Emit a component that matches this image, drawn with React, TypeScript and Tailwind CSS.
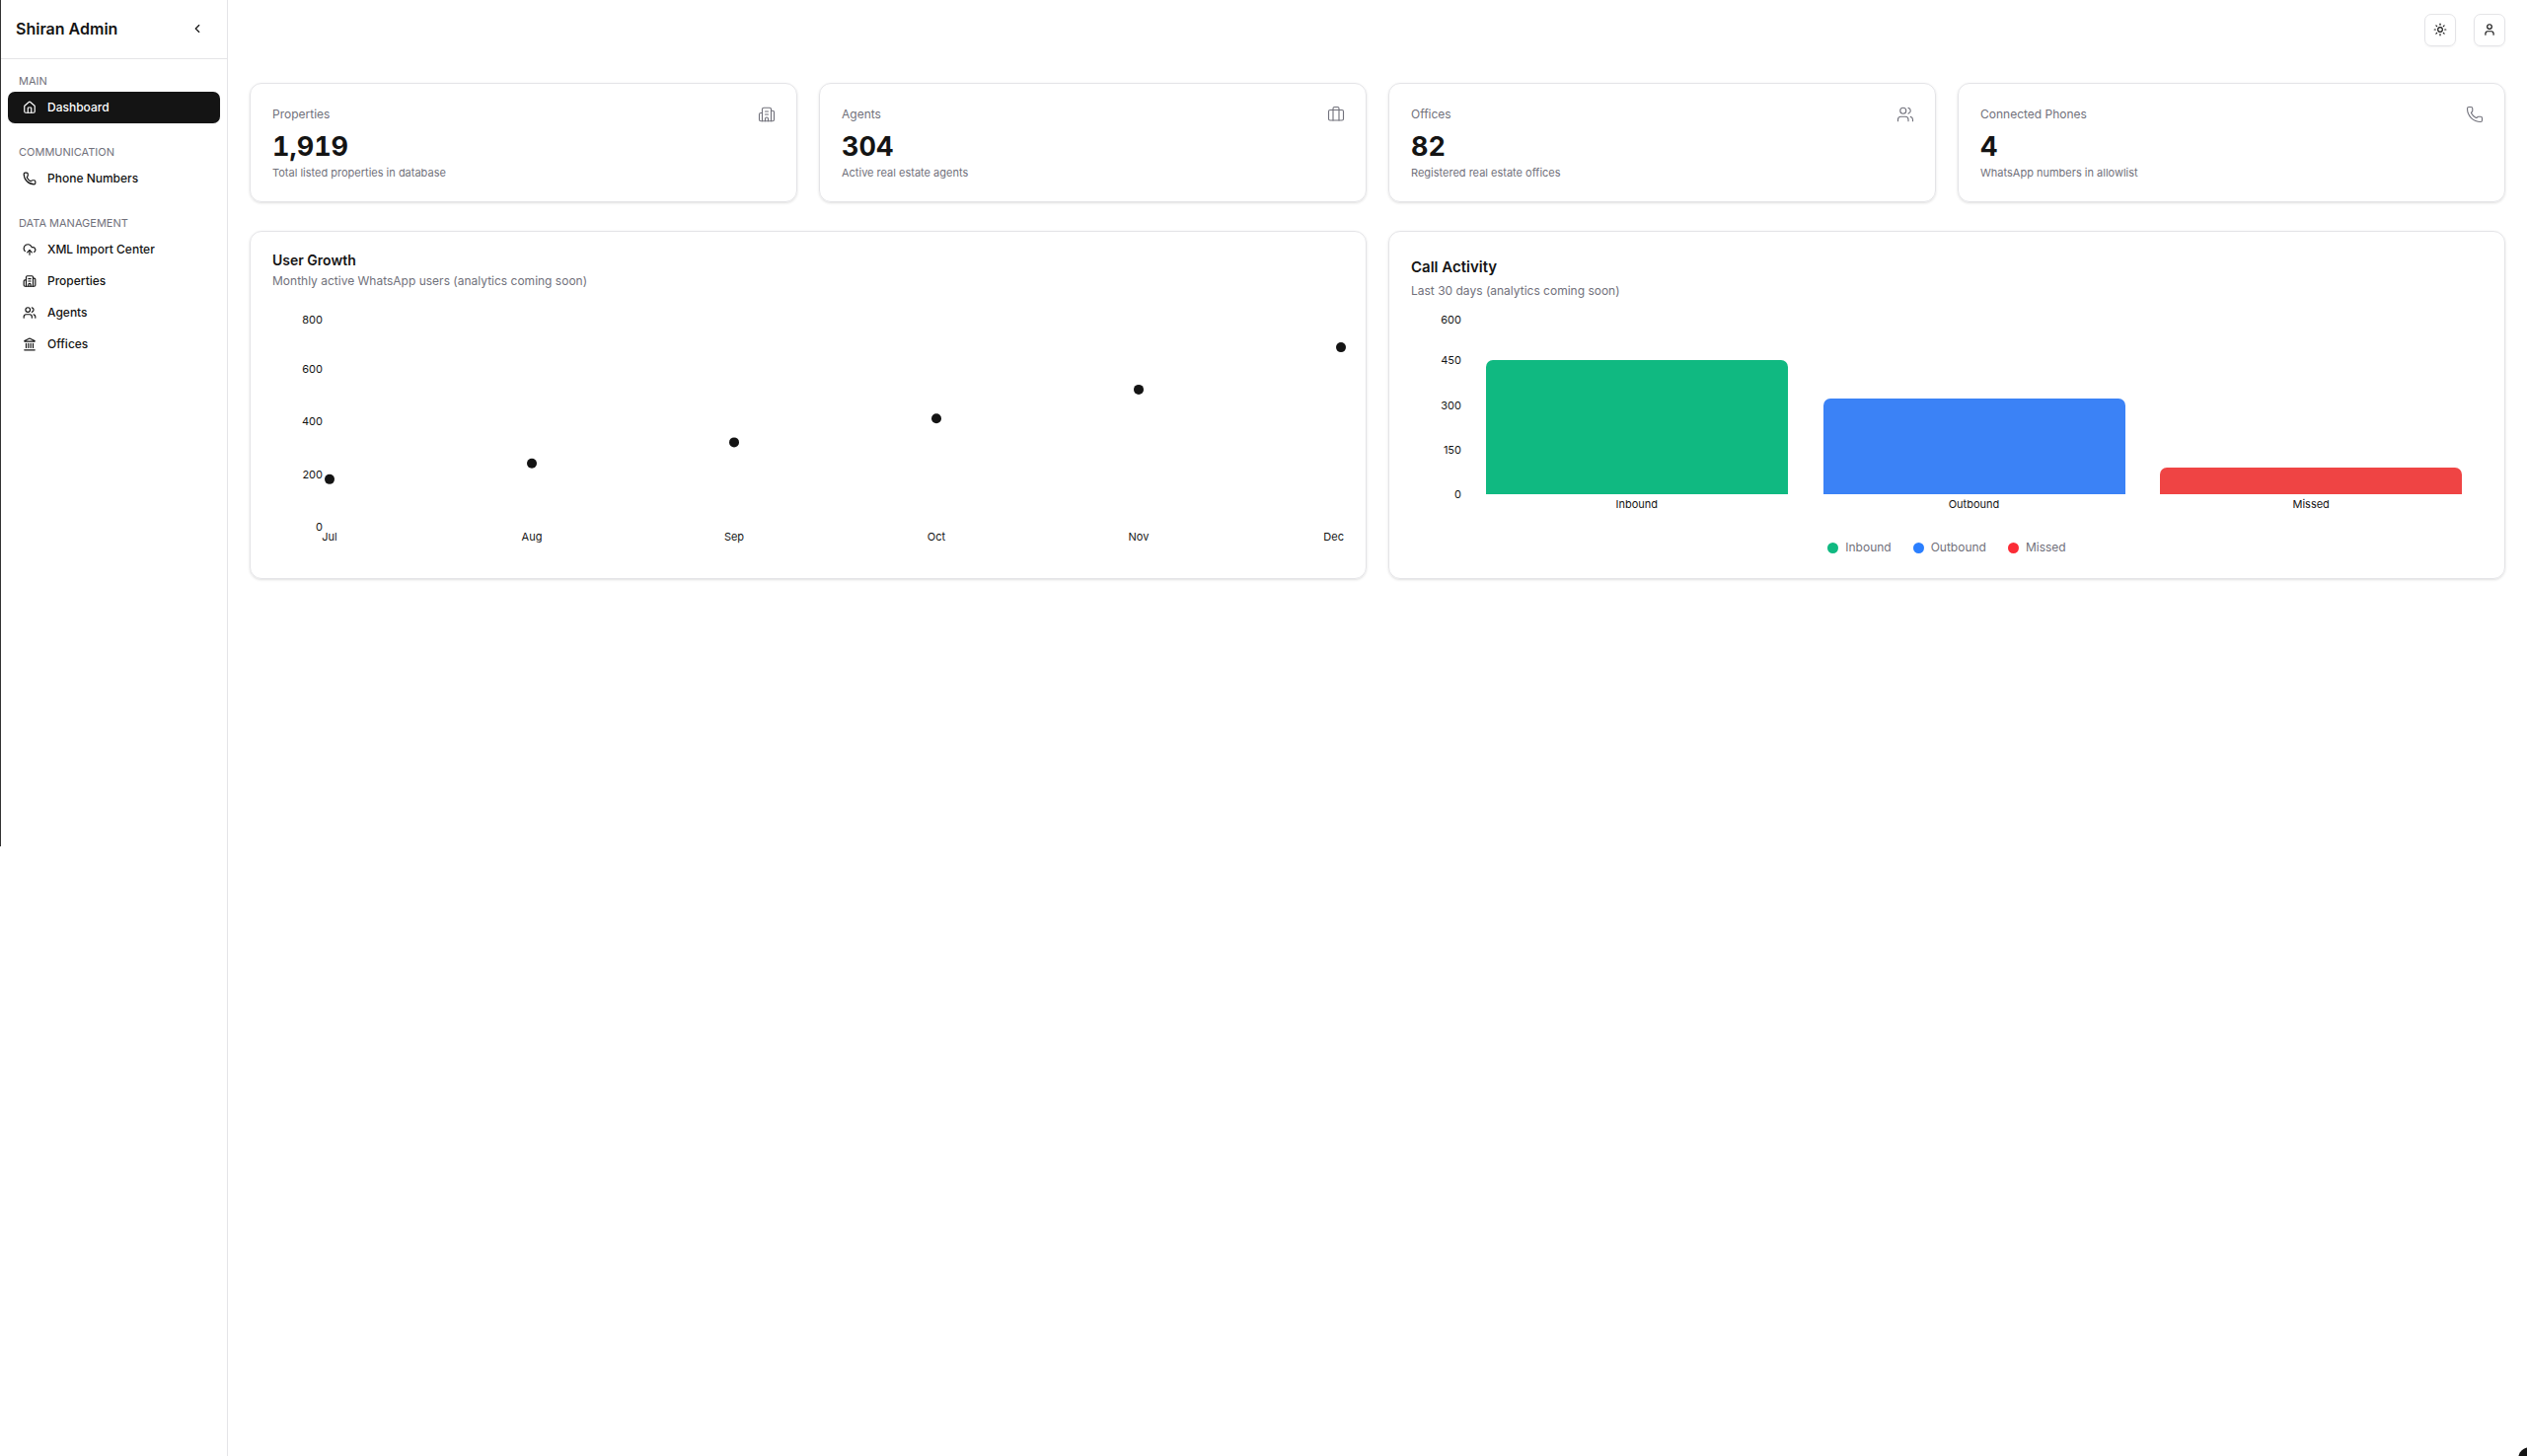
import { useLayoutEffect, useRef, useState } from "react";
import type { ReactNode } from "react";
import {
  Briefcase,
  Building2,
  ChevronLeft,
  CloudUpload,
  House,
  Landmark,
  Phone,
  Sun,
  User,
  Users,
} from "lucide-react";
import type { LucideIcon } from "lucide-react";

type NavItem = { label: string; icon: LucideIcon; active?: boolean };

const navGroups: { title: string; items: NavItem[] }[] = [
  { title: "MAIN", items: [{ label: "Dashboard", icon: House, active: true }] },
  { title: "COMMUNICATION", items: [{ label: "Phone Numbers", icon: Phone }] },
  {
    title: "DATA MANAGEMENT",
    items: [
      { label: "XML Import Center", icon: CloudUpload },
      { label: "Properties", icon: Building2 },
      { label: "Agents", icon: Users },
      { label: "Offices", icon: Landmark },
    ],
  },
];

const stats: { label: string; value: string; note: string; icon: LucideIcon }[] = [
  { label: "Properties", value: "1,919", note: "Total listed properties in database", icon: Building2 },
  { label: "Agents", value: "304", note: "Active real estate agents", icon: Briefcase },
  { label: "Offices", value: "82", note: "Registered real estate offices", icon: Users },
  { label: "Connected Phones", value: "4", note: "WhatsApp numbers in allowlist", icon: Phone },
];

const growth = [
  { month: "Jul", users: 180 },
  { month: "Aug", users: 240 },
  { month: "Sep", users: 320 },
  { month: "Oct", users: 410 },
  { month: "Nov", users: 520 },
  { month: "Dec", users: 680 },
];

const calls = [
  { kind: "Inbound", count: 450, fill: "#10b981", dot: "bg-[#10b981]" },
  { kind: "Outbound", count: 320, fill: "#3b82f6", dot: "bg-[#2b7fff]" },
  { kind: "Missed", count: 90, fill: "#ef4444", dot: "bg-[#fb2c36]" },
];

const AXIS_WIDTH = 58;
const MARGIN_RIGHT = 3;
const MARGIN_TOP = 8;
const AXIS_HEIGHT = 30;

function Chart({ height, label, children }: { height: number; label: string; children: (width: number) => ReactNode }) {
  const ref = useRef<HTMLDivElement>(null);
  const [width, setWidth] = useState(0);

  useLayoutEffect(() => {
    const node = ref.current;
    if (!node) return;
    setWidth(node.clientWidth);
    const observer = new ResizeObserver(() => setWidth(node.clientWidth));
    observer.observe(node);
    return () => observer.disconnect();
  }, []);

  return (
    <div ref={ref} className="min-w-0">
      <svg role="img" aria-label={label} className="block w-full overflow-visible fill-[#141414] text-[11px]" height={height}>
        {width > 0 && children(width)}
      </svg>
    </div>
  );
}

function YTicks({ values, height }: { values: number[]; height: number }) {
  const bottom = height - AXIS_HEIGHT;
  const max = Math.max(...values);
  return (
    <>
      {values.map((v) => {
        const y = bottom - (v / max) * (bottom - MARGIN_TOP);
        return (
          <text key={v} x={AXIS_WIDTH - 7} y={Math.max(y, 12) + 4} textAnchor="end">
            {v}
          </text>
        );
      })}
    </>
  );
}

function GrowthChart() {
  const height = 252;
  const bottom = height - AXIS_HEIGHT;
  return (
    <Chart height={height} label="Monthly active users, July to December">
      {(width) => {
        const step = (width - AXIS_WIDTH - MARGIN_RIGHT) / (growth.length - 1);
        return (
          <>
            <YTicks values={[0, 200, 400, 600, 800]} height={height} />
            {growth.map((p, i) => {
              const x = AXIS_WIDTH + i * step;
              const last = i === growth.length - 1;
              return (
                <g key={p.month}>
                  <circle cx={x} cy={bottom - (p.users / 800) * (bottom - MARGIN_TOP)} r={5} />
                  <text x={last ? width : x} y={bottom + 14} textAnchor={last ? "end" : "middle"}>
                    {p.month}
                  </text>
                </g>
              );
            })}
          </>
        );
      }}
    </Chart>
  );
}

function CallChart() {
  const height = 219;
  const bottom = height - AXIS_HEIGHT;
  return (
    <Chart height={height} label="Calls by type over the last 30 days">
      {(width) => {
        const band = (width - AXIS_WIDTH - MARGIN_RIGHT) / calls.length;
        const barWidth = Math.round(band - 36);
        return (
          <>
            <YTicks values={[0, 150, 300, 450, 600]} height={height} />
            {calls.map((c, i) => {
              const center = AXIS_WIDTH + band * (i + 0.5);
              const x = Math.round(center - barWidth / 2);
              const top = Math.round(bottom - (c.count / 600) * (bottom - MARGIN_TOP));
              return (
                <g key={c.kind}>
                  <path
                    fill={c.fill}
                    d={`M${x} ${bottom}V${top + 7}a7 7 0 0 1 7 -7h${barWidth - 14}a7 7 0 0 1 7 7V${bottom}Z`}
                  />
                  <text x={center} y={bottom + 14} textAnchor="middle">
                    {c.kind}
                  </text>
                </g>
              );
            })}
          </>
        );
      }}
    </Chart>
  );
}

function Sidebar() {
  return (
    <aside className="w-[231px] shrink-0 border-r border-[#e4e4e7]">
      <div className="flex h-[60px] items-center justify-between border-b border-[#e4e4e7] pr-[18px] pb-0.5 pl-4">
        <span className="text-base font-semibold">Shiran Admin</span>
        <button type="button" aria-label="Collapse sidebar" className="flex size-6 items-center justify-center">
          <ChevronLeft size={14} />
        </button>
      </div>
      <nav className="flex flex-col gap-[18px] pt-[11px] pr-[7px] pl-2">
        {navGroups.map((group) => (
          <section key={group.title}>
            <h2 className="px-[11px] text-[11px] leading-[22px] font-normal text-[#71717b]">{group.title}</h2>
            <ul>
              {group.items.map(({ label, icon: Icon, active }) => (
                <li key={label}>
                  <a
                    href="#"
                    aria-current={active ? "page" : undefined}
                    className={
                      active
                        ? "flex h-8 items-center gap-[11px] rounded-[7px] bg-[#141414] px-[15px] text-xs font-medium text-white shadow-xs"
                        : "flex h-8 items-center gap-[11px] rounded-[7px] px-[15px] text-xs font-medium"
                    }
                  >
                    <Icon size={14} />
                    {label}
                  </a>
                </li>
              ))}
            </ul>
          </section>
        ))}
      </nav>
    </aside>
  );
}

function IconButton({ label, icon: Icon }: { label: string; icon: LucideIcon }) {
  return (
    <button
      type="button"
      aria-label={label}
      className="flex h-[33px] w-8 items-center justify-center rounded-[7px] border border-[#e4e4e7] shadow-xs"
    >
      <Icon size={14} />
    </button>
  );
}

export default function App() {
  return (
    <div className="relative flex min-h-screen bg-white font-['Inter',sans-serif] text-[#141414]">
      <div className="absolute top-0 left-0 h-[858px] w-px bg-[#333333]" />
      <Sidebar />
      <div className="min-w-0 flex-1">
        <header className="flex h-[60px] items-center justify-end gap-[18px] px-[22px]">
          <IconButton label="Toggle theme" icon={Sun} />
          <IconButton label="Account" icon={User} />
        </header>
        <main className="flex flex-col gap-[29px] px-[22px] pt-6">
          <div className="grid grid-cols-4 gap-[22px]">
            {stats.map(({ label, value, note, icon: Icon }) => (
              <section
                key={label}
                className="rounded-xl border border-[#e4e4e7] pt-[22px] pr-[21px] pb-5 pl-[22px] shadow-sm"
              >
                <div className="flex items-center justify-between">
                  <h3 className="text-xs leading-[18px] text-[#71717b]">{label}</h3>
                  <Icon size={18} strokeWidth={1.5} className="text-[#71717b]" />
                </div>
                <p className="pt-1.5 text-[27px] leading-9 font-bold tabular-nums">{value}</p>
                <p className="text-[11px] leading-[17px] text-[#71717b]">{note}</p>
              </section>
            ))}
          </div>
          <div className="grid grid-cols-2 gap-[22px]">
            <section className="rounded-xl border border-[#e4e4e7] px-[22px] pt-[18px] pb-[22px] shadow-sm">
              <h3 className="text-sm leading-[22px] font-semibold">User Growth</h3>
              <p className="mb-[17px] text-xs leading-5 text-[#71717b]">
                Monthly active WhatsApp users (analytics coming soon)
              </p>
              <GrowthChart />
            </section>
            <section className="rounded-xl border border-[#e4e4e7] px-[22px] pt-[22px] pb-[21px] shadow-sm">
              <h3 className="text-[15px] leading-7 font-semibold">Call Activity</h3>
              <p className="mb-[7px] text-xs leading-5 text-[#71717b]">Last 30 days (analytics coming soon)</p>
              <CallChart />
              <ul className="flex justify-center gap-[22px] pt-[14px] text-xs leading-5 text-[#71717b]">
                {calls.map((c) => (
                  <li key={c.kind} className="flex items-center gap-[7px]">
                    <span className={`size-[11px] rounded-full ${c.dot}`} />
                    {c.kind}
                  </li>
                ))}
              </ul>
            </section>
          </div>
        </main>
      </div>
      <button
        type="button"
        aria-label="Open help"
        className="fixed -right-[15px] -bottom-[15px] size-6 rounded-full bg-[#141414] shadow-md"
      />
    </div>
  );
}
